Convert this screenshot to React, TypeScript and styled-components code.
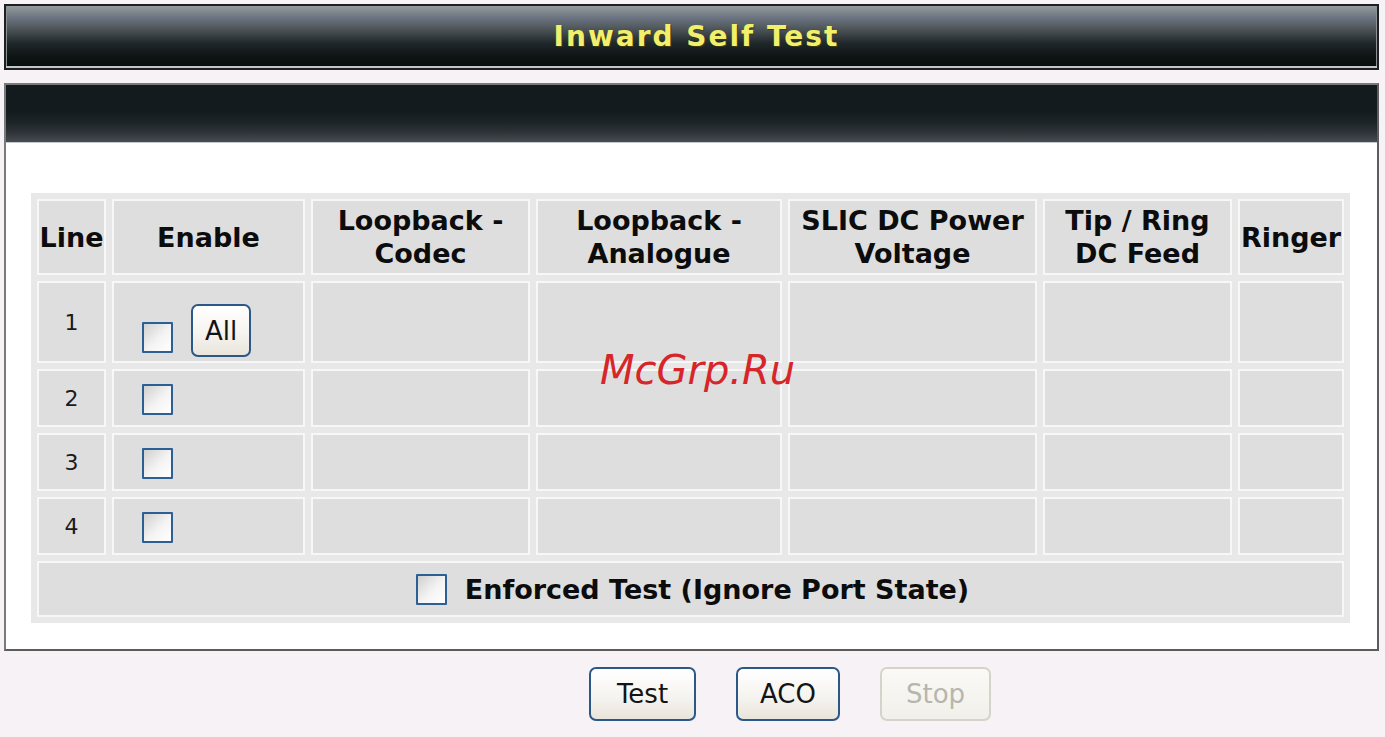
import React from "react";
import styled, { createGlobalStyle } from "styled-components";

const GlobalStyle = createGlobalStyle`
  html, body {
    margin: 0;
    padding: 0;
    background-color: #f7f2f6;
  }
  body {
    font-family: "DejaVu Sans", Verdana, sans-serif;
  }
  * {
    box-sizing: border-box;
  }
`;

const Page = styled.div`
  position: relative;
  width: 1385px;
  min-height: 737px;
  padding: 4px 6px 0 4px;
`;

const TitleBar = styled.div`
  display: flex;
  align-items: center;
  justify-content: center;
  height: 66px;
  padding-left: 10px;
  border: 2px solid #1c2022;
  background: linear-gradient(
    to bottom,
    #939b9b 0%,
    #6d7683 18%,
    #4c5357 38%,
    #20272a 60%,
    #0e1314 82%,
    #0a0d0e 100%
  );
  box-shadow: inset 0 -2px 0 #c2c6c6, inset 1px 0 0 #8a9292,
    inset -1px 0 0 #8a9292;
`;

const TitleText = styled.h1`
  margin: 0 0 1px 0;
  font-size: 28px;
  font-weight: bold;
  letter-spacing: 2px;
  color: #f2ef6c;
  text-shadow: 1px 1px 0 #3b3a10;
`;

const Panel = styled.div`
  margin-top: 13px;
  border: 2px solid #5c5c5c;
  border-top-color: #7a7a7a;
  border-left-color: #7a7a7a;
  background-color: #ffffff;
`;

const PanelHeader = styled.div`
  height: 58px;
  background: linear-gradient(
    to bottom,
    #141b1f 0%,
    #141b1f 45%,
    #1d2428 65%,
    #2c3236 82%,
    #464c53 100%
  );
  border-bottom: 1px solid #c4c8cc;
`;

const PanelBody = styled.div`
  padding: 50px 23px 26px 25px;
`;

const Grid = styled.table`
  width: 1319px;
  border-collapse: separate;
  border-spacing: 6px;
  background-color: #e8e8e8;
  table-layout: fixed;
`;

const HeadCell = styled.th<{ $w: number }>`
  width: ${p => p.$w}px;
  height: 76px;
  padding: 0;
  border: 2px solid #f7f7f7;
  background-color: #dedede;
  font-size: 27px;
  line-height: 33px;
  font-weight: bold;
  color: #0c0c0c;
  text-align: center;
  vertical-align: middle;
  white-space: nowrap;
`;

const Cell = styled.td<{ $h?: number; $pad?: string; $bottom?: boolean }>`
  height: ${p => p.$h || 57}px;
  padding: ${p => p.$pad || "0"};
  border: 2px solid #f7f7f7;
  background-color: #dedede;
  vertical-align: ${p => (p.$bottom ? "bottom" : "middle")};
`;

const LineNo = styled.div`
  font-size: 22px;
  color: #1a1a1a;
  text-align: center;
`;

const EnableWrap = styled.div`
  display: flex;
  align-items: flex-end;
  gap: 18px;
`;

const Check = styled.input.attrs({ type: "checkbox" })<{ $lift?: number }>`
  appearance: none;
  margin: 0 0 ${p => p.$lift || 0}px 0;
  width: 31px;
  height: 31px;
  flex: none;
  border: 2px solid #2d5f92;
  border-radius: 1px;
  background: linear-gradient(135deg, #d0d0d0 0%, #f4f4f4 55%, #ffffff 100%);
`;

const FooterWrap = styled.div`
  display: flex;
  align-items: center;
  justify-content: center;
  gap: 18px;
  padding-left: 4px;
`;

const FooterLabel = styled.span`
  font-size: 27px;
  font-weight: bold;
  color: #0c0c0c;
`;

const Button = styled.button<{ $w: number; $h?: number }>`
  width: ${p => p.$w}px;
  height: ${p => p.$h || 54}px;
  padding: 0;
  border: 2px solid #2b5887;
  border-radius: 7px;
  background: linear-gradient(to bottom, #ffffff 0%, #f6f4f0 55%, #e9e5dc 100%);
  font-family: "DejaVu Sans", Verdana, sans-serif;
  font-size: 26px;
  color: #141414;
  &:disabled {
    border-color: #d6d4ca;
    color: #b6b6ae;
    background: linear-gradient(to bottom, #faf9f6 0%, #f2f0ea 100%);
  }
`;

const ButtonRow = styled.div`
  display: flex;
  gap: 40px;
  margin-top: 16px;
  padding-left: 585px;
`;

const Watermark = styled.div`
  position: absolute;
  left: 600px;
  top: 346px;
  font-size: 40px;
  font-style: italic;
  color: #d6262a;
  line-height: 48px;
  pointer-events: none;
`;

const columns: { label: React.ReactNode; w: number }[] = [
  { label: "Line", w: 69 },
  { label: "Enable", w: 193 },
  { label: <>Loopback -<br />Codec</>, w: 219 },
  { label: <>Loopback -<br />Analogue</>, w: 246 },
  { label: <>SLIC DC Power<br />Voltage</>, w: 249 },
  { label: <>Tip / Ring<br />DC Feed</>, w: 189 },
  { label: "Ringer", w: 106 }
];

const rows = [
  { n: 1, h: 82 },
  { n: 2, h: 58 },
  { n: 3, h: 58 },
  { n: 4, h: 58 }
];

const App: React.FC = () => {
  return (
    <Page>
      <GlobalStyle />
      <TitleBar>
        <TitleText>Inward Self Test</TitleText>
      </TitleBar>
      <Panel>
        <PanelHeader />
        <PanelBody>
          <Grid>
            <thead>
              <tr>
                {columns.map((c, i) => (
                  <HeadCell key={i} $w={c.w}>
                    {c.label}
                  </HeadCell>
                ))}
              </tr>
            </thead>
            <tbody>
              {rows.map(r => (
                <tr key={r.n}>
                  <Cell $h={r.h}>
                    <LineNo>{r.n}</LineNo>
                  </Cell>
                  {r.n === 1 ? (
                    <Cell $h={r.h} $bottom $pad="0 0 4px 28px">
                      <EnableWrap>
                        <Check $lift={4} />
                        <Button type="button" $w={60} $h={53}>
                          All
                        </Button>
                      </EnableWrap>
                    </Cell>
                  ) : (
                    <Cell $h={r.h} $pad="3px 0 0 28px">
                      <EnableWrap>
                        <Check />
                      </EnableWrap>
                    </Cell>
                  )}
                  <Cell $h={r.h} />
                  <Cell $h={r.h} />
                  <Cell $h={r.h} />
                  <Cell $h={r.h} />
                  <Cell $h={r.h} />
                </tr>
              ))}
              <tr>
                <Cell colSpan={7} $h={56}>
                  <FooterWrap>
                    <Check />
                    <FooterLabel>Enforced Test (Ignore Port State)</FooterLabel>
                  </FooterWrap>
                </Cell>
              </tr>
            </tbody>
          </Grid>
        </PanelBody>
      </Panel>
      <ButtonRow>
        <Button type="button" $w={107}>
          Test
        </Button>
        <Button type="button" $w={104}>
          ACO
        </Button>
        <Button type="button" $w={111} disabled>
          Stop
        </Button>
      </ButtonRow>
      <Watermark>McGrp.Ru</Watermark>
    </Page>
  );
};

export default App;
